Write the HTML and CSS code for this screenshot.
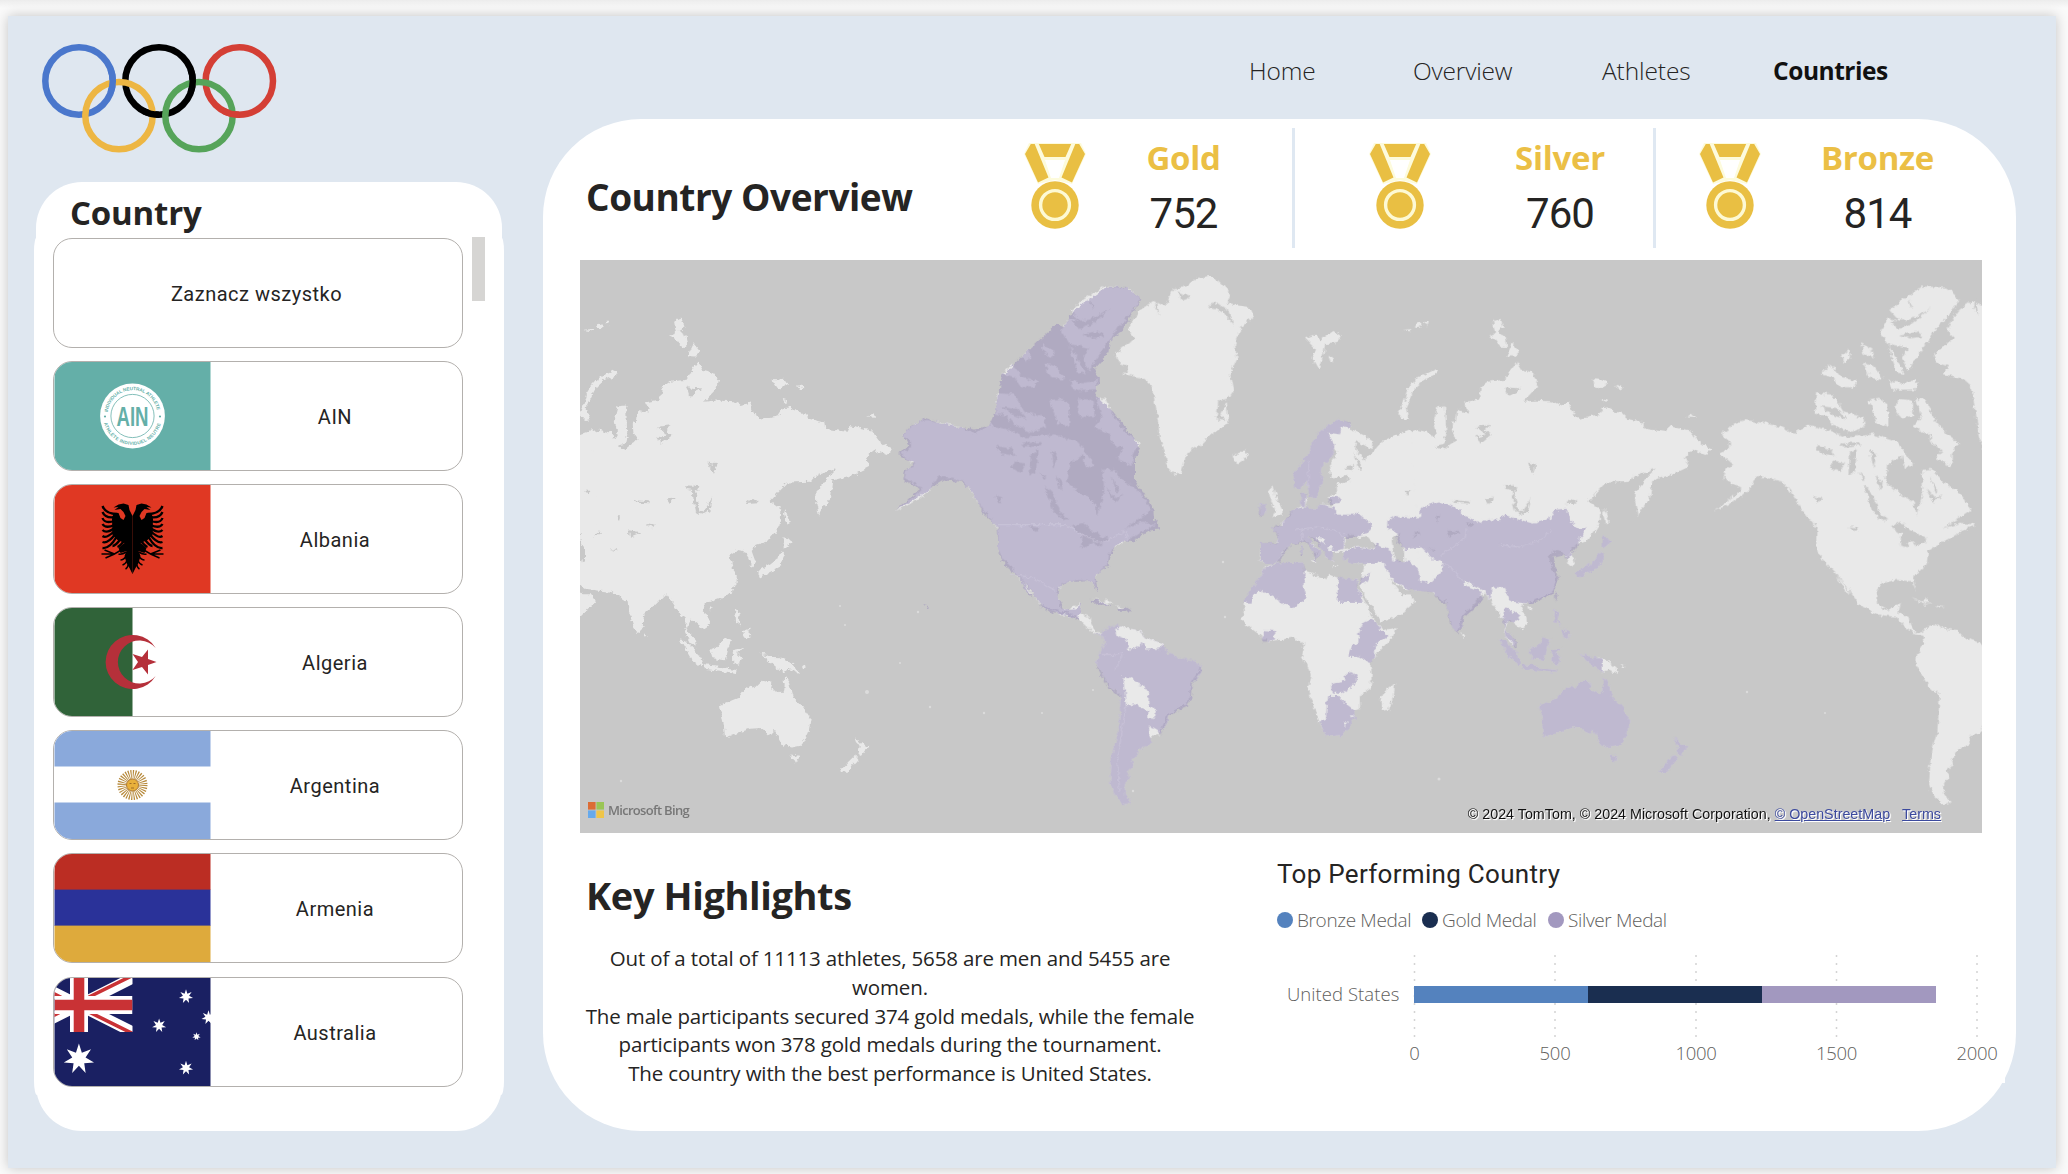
FILE: index.html
```html
<!DOCTYPE html>
<html lang="en">
<head>
<meta charset="utf-8">
<title>Countries</title>
<link rel="stylesheet" href="styles.css">
</head>
<body>
<div class="board">
  <div class="left">
    <svg class="rings" viewBox="42 43 236 110" fill="none" stroke-width="6.5">
      <circle cx="79" cy="81" r="33.7" stroke="#4a77cc"/>
      <circle cx="159" cy="81" r="33.7" stroke="#000"/>
      <circle cx="239.3" cy="81" r="33.7" stroke="#d43f35"/>
      <circle cx="119" cy="115.6" r="33.7" stroke="#edb643"/>
      <circle cx="199" cy="115.6" r="33.7" stroke="#56a45a"/>
      <path d="M110.7 69.5A33.7 33.7 0 0 1 110.7 92.5" stroke="#4a77cc"/>
      <path d="M190.7 69.5A33.7 33.7 0 0 1 190.7 92.5M159 114.7A33.7 33.7 0 0 1 143.2 110.8" stroke="#000"/>
      <path d="M239.3 114.7A33.7 33.7 0 0 1 223.5 110.8" stroke="#d43f35"/>
    </svg>
    <aside class="sidebar">
      <h2 class="side-title">Country</h2>
      <div class="list">
        <div class="items">
          <div class="item"><span class="name">Zaznacz wszystko</span></div>
          <div class="item">
            <svg class="flag" viewBox="0 0 156 108"><rect width="156" height="108" fill="#64afa8"/><circle cx="78" cy="54" r="32.4" fill="#fff"/><circle cx="78" cy="54" r="21.6" fill="none" stroke="#64afa8" stroke-width=".8"/>
              <circle cx="50.5" cy="54.5" r="1.1" fill="#64afa8"/><circle cx="105.5" cy="54.5" r="1.1" fill="#64afa8"/>
              <path id="arcTop" d="M53.2 50A25 25 0 0 1 102.800 50" fill="none"/><path id="arcBottom" d="M49.500 61A29.500 29.500 0 0 0 106.500 61" fill="none"/>
              <text class="ain-ring"><textPath href="#arcTop" textLength="70">INDIVIDUAL NEUTRAL ATHLETE</textPath></text>
              <text class="ain-ring"><textPath href="#arcBottom" textLength="76">ATHLÈTE INDIVIDUEL NEUTRE</textPath></text>
              <text class="ain" x="78" y="64" textLength="32" lengthAdjust="spacingAndGlyphs" text-anchor="middle">AIN</text></svg>
            <span class="name">AIN</span></div>
          <div class="item">
            <svg class="flag" viewBox="0 0 156 108"><rect width="156" height="108" fill="#e03823"/>
              <g id="eagleHalf"><path d="M78 31L81 25L82 20L87 18.500L92 19.500L97 22.500L92 22L96 25L90 24L87 27L85 31L87 35L90 33L92 28L97 28L98.500 34L98 50L93 55L86 58L92 63L90 68L84 66L86 71L84 78L81 83L78 89Z"/>
              <path fill="none" stroke="#000" stroke-width="2.300" d="M93 29Q105 29 108 21M95 32Q105 34 108 27M96 36Q106 39 108 33M96 40Q105 44 108 39M96 43Q104 49 108 45M96 46Q104 54 108 51M95 49Q103 59 108 57M94 52Q101 64 108 63M90 54Q95 61 98 61M86 55Q90 61 93 62"/>
              <path fill="none" stroke="#000" stroke-width="1.500" d="M86 63L96 69L109 69M96 69L106 65M96 69L105 73M84 67Q89 70 92 69M84 71Q87 75 90 75M83 75Q85 79 88 80M82 79Q83 83 85 84"/></g>
              <use href="#eagleHalf" transform="matrix(-1 0 0 1 156 0)"/></svg>
            <span class="name">Albania</span></div>
          <div class="item">
            <svg class="flag" viewBox="0 0 156 108"><rect width="156" height="108" fill="#fff"/><rect width="78" height="108" fill="#306339"/><path fill="#b5303a" d="M101.200 40A27 27 0 1 0 101.200 68A21.500 21.500 0 1 1 101.200 40ZM102 54L93.500 57L93.500 66.500L87.500 59L78 62L83.500 54L78 46L87.500 49L93.500 41.500L93.500 51Z"/></svg>
            <span class="name">Algeria</span></div>
          <div class="item">
            <svg class="flag" viewBox="0 0 156 108"><rect width="156" height="108" fill="#fff"/><path fill="#8aa9db" d="M0 0H156V35.600H0ZM0 71.600H156V108H0Z"/><circle cx="78" cy="54" r="10.500" fill="none" stroke="#b78a3c" stroke-width="9" stroke-dasharray="1 1.060"/><circle cx="78" cy="54" r="6" fill="#e8b03b" stroke="#a8702a" stroke-width=".9"/><path d="M75 52.500h2M79 52.500h2M76.500 57h3" stroke="#8c5a20" stroke-width=".8"/></svg>
            <span class="name">Argentina</span></div>
          <div class="item">
            <svg class="flag" viewBox="0 0 156 108"><rect width="156" height="36" fill="#bb2d23"/><rect y="35.600" width="156" height="36.400" fill="#2a3299"/><rect y="71.600" width="156" height="36.400" fill="#deaa3c"/></svg>
            <span class="name">Armenia</span></div>
          <div class="item">
            <svg class="flag" viewBox="0 0 156 108"><defs><clipPath id="jack"><rect width="78" height="54"/></clipPath>
              <path id="star7" fill="#fff" d="M0-10L1.910-3.960L7.820-6.230L4.290-.98L9.750 2.230L3.440 2.740L4.340 9.010L0 4.400L-4.340 9.010L-3.440 2.740L-9.750 2.230L-4.290-.98L-7.820-6.230L-1.910-3.960Z"/></defs>
              <rect width="156" height="108" fill="#1a2062"/>
              <g clip-path="url(#jack)"><path d="M-29 0L78 54M-29 54L78 0" stroke="#fff" stroke-width="11"/><path d="M24.500 29.500L78 56M24.500 24.500L78-2M-29 2L24.500 29M-29 52L24.500 25" transform="translate(0 -.500)" stroke="#c93235" stroke-width="3.600"/><path d="M24.500 0V54M0 27H78" stroke="#fff" stroke-width="18"/><path d="M24.500 0V54M0 27H78" stroke="#c93235" stroke-width="10.600"/></g>
              <use href="#star7" transform="translate(24.400 81) scale(1.550)"/><use href="#star7" transform="translate(131.500 18.500) scale(.72)"/><use href="#star7" transform="translate(104.600 47.600) scale(.72)"/><use href="#star7" transform="translate(154 39.500) scale(.72)"/><use href="#star7" transform="translate(142 58.500) scale(.43)"/><use href="#star7" transform="translate(131.500 90) scale(.72)"/></svg>
            <span class="name">Australia</span></div>
        </div>
        <div class="scroll"></div>
      </div>
    </aside>
  </div>
  <div class="right">
    <nav class="nav"><a class="n1">Home</a><a class="n2">Overview</a><a class="n3">Athletes</a><a class="n4">Countries</a></nav>
    <main class="panel">
      <header class="head">
        <h1 class="title">Country Overview</h1>
        <div class="stat gold">
          <svg class="medal" viewBox="0 0 60 85"><defs><g id="medal"><path fill="#fdfbdc" d="M4-1H56L61 10L47 40L30 36L13 40L-1 10Z"/><path fill="#fff" d="M20 16H40L34 34H26Z"/><path fill="#e9bf43" d="M5.800 0H9.700L23.500 33.500L13 38.500L0 10ZM54.200 0H50.300L36.500 33.500L47 38.500L60 10ZM13.800 0H46.200L40.500 13H19.500Z"/><circle cx="30" cy="61" r="23.700" fill="#e9bf43"/><circle cx="30" cy="61" r="14.400" fill="#e9bf43" stroke="#fdf9d4" stroke-width="3.400"/></g></defs><use href="#medal"/></svg>
          <div class="fig"><b>Gold</b><span>752</span></div>
        </div>
        <div class="stat silver"><svg class="medal" viewBox="0 0 60 85"><use href="#medal"/></svg><div class="fig"><b>Silver</b><span>760</span></div></div>
        <div class="stat bronze"><svg class="medal" viewBox="0 0 60 85"><use href="#medal"/></svg><div class="fig"><b>Bronze</b><span>814</span></div></div>
      </header>
      <div class="map">
        <svg class="world" viewBox="0 0 1402 573">
          <defs>
            <filter id="coast" x="0" y="0" width="1402" height="573" filterUnits="userSpaceOnUse" color-interpolation-filters="sRGB">
              <feTurbulence type="fractalNoise" baseFrequency=".2" numOctaves="3" seed="4" result="n"/>
              <feDisplacementMap in="SourceGraphic" in2="n" scale="6" xChannelSelector="R" yChannelSelector="G"/>
            </filter>
            <path id="isles" d="M330 1035L345 1037L375 1062L398 1093L392 1106L363 1086ZM398 1100L440 1104L460 1112L500 1116L498 1124L402 1113ZM420 1062L445 1053L465 1030L484 1036L474 1060L466 1090L428 1085ZM488 1064L524 1057L502 1070L514 1080L507 1102L490 1097ZM495 953L510 965L506 986L518 1000L498 988ZM516 1013L538 1006L541 1034L525 1030ZM570 1073L590 1076L605 1084L638 1085V1122L600 1095Z"/>
            <path id="oz" d="M450 1210L505 1190L520 1172L545 1158L555 1165L578 1145L605 1150L600 1165L635 1180L643 1170L645 1135L657 1150L668 1185L700 1215L722 1245L716 1280L696 1317L665 1322L635 1314L612 1275L598 1288L575 1270L540 1272L465 1296L462 1265ZM661 1341L688 1344L675 1363ZM856 1295L874 1311L895 1319L876 1345L862 1338L866 1322ZM856 1342L866 1352L832 1390L811 1384L835 1360Z"/>
            <path id="japan" d="M641 760L668 775L641 794ZM632 800L645 813L630 842L600 856L567 872L561 855L601 836L624 820Z"/>
            <g id="old">
              <path d="M20 495L50 490L88 478L122 486L136 500L143 490L134 455L146 415L168 413L172 490L165 515L140 520L165 530L185 515L206 505L190 485L188 455L200 460L205 425L240 432L225 405L270 397L275 365L300 350L350 345L365 320L385 297L398 318L430 325L447 345L443 365L402 403L440 400L490 402L515 412L540 405L552 435L572 448L625 440L640 420L660 418L680 430L700 432L722 450L763 458L766 475L830 483L838 468L905 480L925 505L945 518L970 528L950 545L910 530L888 552L897 577L850 597L790 612L783 660L760 685L747 706L738 670L740 645L765 612L800 580L735 600L722 616L650 618L598 668L634 690L632 725L615 750L590 775L560 783L545 800L557 830L545 842L535 820L520 800L503 797L478 812L490 850L500 862L500 885L490 905L470 920L405 940L395 960L415 975L417 995L400 1008L362 982L350 1010L378 1035L380 1052L362 1045L345 1015L350 985L325 962L310 940L288 912L240 955L222 970L218 1000L203 1018L190 1000L175 955L172 925L165 935L145 920L125 908L80 905L20 890Z"/>
              <path d="M646 688L659 722L649 727L642 700ZM219 1015L230 1027L222 1031ZM418 946L428 950L420 958ZM138 318L143 330L105 345L80 365L65 390L50 420L60 450L45 452L28 435L45 400L55 370L80 345L110 330ZM312 188L335 183L344 205L325 215L350 230L355 258L335 257L315 235L300 228L318 222ZM370 248L390 270L378 283L352 282ZM608 343L640 345L657 355L630 368L615 364ZM678 358L704 365L690 372ZM636 395L654 400L644 407ZM892 445L908 435L920 446ZM82 198L95 195L93 207L82 207ZM103 192L116 190L114 200ZM40 212L70 210L66 216ZM625 1080L655 1090L680 1110L690 1127L660 1115L636 1122V1085ZM695 1100L710 1105L700 1110Z"/>
              <use href="#isles"/><use href="#oz"/><use href="#japan"/>
              <g transform="translate(-1167)">
                <path d="M1235 478L1190 492L1145 510L1110 545L1092 560L1065 525L1070 508L1095 520L1112 528L1120 510L1090 490L1050 475L1055 462L1020 450L985 465L950 492L930 530L905 565L878 597L882 632L900 637L920 615L928 655L950 660L958 632L970 615L962 600L965 575L1000 545L1003 525L1012 540L990 575L992 605L1045 600L1050 612L1010 620L1012 650L985 655L1003 680L960 675L945 690L915 682L922 660L915 645L902 652L903 682L880 690L870 708L850 720L835 737L815 737L835 757L832 782L782 778L780 825L800 835L835 830L850 800L868 785L915 770L935 795L950 808L942 826L965 802L932 775L930 762L950 770L972 800L982 822L1000 827L997 805L1028 800L1030 822L1060 832L1095 833L1083 880L1080 892L1100 930L1145 988L1200 970L1245 935L1235 915L1205 915L1165 870L1180 880L1210 900L1260 905Z"/>
                <path d="M795 840L835 832L910 830L915 855L980 875L985 860L1010 870L1072 876L1070 890L1095 935L1115 975L1130 990L1145 1010L1187 1005L1180 1025L1110 1095L1115 1130L1112 1165L1080 1185L1080 1220L1062 1225L1065 1243L1045 1275L1020 1290L978 1293L958 1255L940 1210L925 1170L935 1130L905 1080L915 1050L880 1030L850 1035L800 1040L775 1020L745 1000L725 985L735 960L730 935L755 900L780 870ZM1185 1151L1182 1180L1167 1222L1146 1224L1141 1195L1155 1172Z"/>
                <path d="M805 640L818 628L825 650L848 690L845 705L818 712L825 690L812 662ZM778 675L800 675L798 700L778 703ZM695 548L735 532L746 548L715 567L700 560ZM915 235L945 225L962 240L1000 215L1025 230L1005 248L975 250L970 278L955 318L935 285L948 265ZM985 280L1003 295L992 300ZM902 785L908 785L908 808L902 805ZM930 822L948 822L944 830ZM1000 838L1018 842L1002 843Z"/>
                <path class="water" d="M1032 795L1038 765L1055 753L1075 768L1100 760L1128 785L1115 795L1075 788ZM1183 762L1200 752L1197 775L1212 792L1212 825L1190 830L1180 800L1175 775ZM1060 540L1078 560L1088 585L1075 580ZM1035 575L1062 572L1060 585L1035 583Z"/>
              </g>
              <path class="water" d="M368 620L378 650L388 698L405 690L427 658L418 692L395 704L378 695L370 660ZM262 470L305 465L285 480L307 492L275 515L262 495L290 490ZM350 365L395 368L375 380L358 390ZM415 565L442 570L432 595ZM528 675L550 662L568 673ZM190 665L240 668L238 673L195 672ZM288 660L315 658L300 676ZM175 745L215 750L180 762ZM68 765L90 745L94 753ZM345 625L388 628L385 640L350 635ZM120 795L140 797L135 800ZM45 640L65 640L55 650ZM140 705L150 705L147 725ZM230 725L255 730L245 737Z"/>
            </g>
            <g id="newWorld">
              <g transform="translate(333)">
                <path d="M665 490L705 460L735 452L790 460L840 470L880 488L925 465L990 480L1035 498L1120 490L1190 510L1215 540L1165 570L1155 615L1195 645L1240 670L1250 705L1262 665L1270 640L1265 585L1295 582L1335 620L1375 640L1412 690L1380 710L1330 740L1380 725L1425 730L1365 758L1320 780L1285 800L1280 835L1245 865L1240 880L1250 908L1235 880L1190 877L1145 885L1130 905L1135 945L1160 958L1203 938L1195 965L1225 975L1230 995L1245 1015L1275 1018L1272 1024L1240 1018L1215 1000L1185 975L1140 970L1080 945L1040 895L1005 855L965 820L952 800L952 740L910 695L870 640L845 615L800 605L770 600L750 635L700 670L640 695L700 655L725 635L670 605L680 580L700 570L660 540L690 525L690 510Z"/>
                <path d="M1010 865L1025 880L1052 915L1035 905ZM948 380L1000 385L1030 430L1090 445L1095 470L1050 485L1000 465L975 440L945 435ZM962 330L990 305L1000 312L1020 335L1070 350L1060 365L1020 365L1000 340ZM1168 160L1210 130L1270 97L1340 100L1378 130L1350 170L1310 205L1290 235L1275 250L1250 285L1225 320L1205 290L1225 260L1165 250L1140 215L1165 180L1200 190ZM1025 280L1045 265L1050 285L1035 300ZM1085 250L1115 265L1120 285L1090 278ZM1090 300L1125 310L1150 345L1110 340ZM1165 345L1205 355L1248 345L1250 370L1180 372ZM1165 255L1190 290L1215 330L1190 325ZM1195 395L1238 400L1240 440L1205 448L1188 430ZM1105 400L1140 395L1165 410L1165 470L1130 460ZM1245 395L1275 395L1300 445L1340 490L1377 515L1355 540L1355 575L1310 555L1325 530L1290 510L1290 490L1240 470L1265 445ZM1200 520L1240 570L1215 580ZM1235 925L1285 940L1275 943ZM1305 945L1335 950L1315 953ZM1275 925L1295 940L1270 935Z"/>
                <path class="water" d="M1172 735L1205 725L1230 745L1280 768L1250 790L1235 775L1215 790L1200 785L1205 755ZM1090 625L1115 645L1140 700L1165 715L1145 718L1115 690L1105 660ZM945 520L990 528L1005 548L960 540ZM1000 560L1035 565L1020 590L990 580ZM1050 540L1070 530L1065 590L1045 600ZM1110 530L1130 540L1120 580ZM1045 735L1075 738L1065 750ZM1075 590L1095 605L1090 612ZM940 655L965 660L955 672ZM1170 190L1230 185L1290 155L1230 200L1195 210ZM1275 630L1305 660L1330 650L1300 672ZM960 415L1010 420L1040 450L1000 440ZM1225 130L1240 150L1232 152ZM1200 225L1250 215L1270 230L1230 235ZM1020 515L1080 510L1085 518L1030 522ZM1290 600L1315 640L1308 645ZM1125 595L1145 620L1140 640Z"/>
              </g>
              <g transform="translate(1290)">
                <path id="greenland" d="M345 275L385 250L405 235L385 215L400 185L420 160L460 135L495 150L520 105L560 95L590 75L630 68L660 85L690 115L680 140L750 155L760 175L725 205L705 250L710 290L690 330L700 375L680 400L685 460L635 490L600 520L560 540L545 590L525 598L505 580L490 520L480 500L470 430L455 360L430 340L370 330L390 310L355 300Z"/>
                <path class="water" d="M470 130L478 175L465 150ZM535 110L575 125L545 135ZM620 150L650 140L690 165L700 200L670 165ZM655 400L685 395L660 440L680 455L650 450Z"/>
                <path id="south" d="M275 1020L300 1020L320 1005L355 995L365 1005L415 1010L435 1030L490 1045L500 1070L545 1085L585 1090L605 1110L600 1130L577 1150L573 1190L558 1210L510 1230L505 1250L480 1285L450 1290L455 1310L440 1322L415 1325L410 1345L395 1350L400 1370L383 1385L390 1400L375 1420L375 1445L395 1470L375 1475L345 1450L330 1420L335 1350L345 1310L355 1280L362 1185L325 1155L290 1100L295 1075L315 1045L310 1025Z"/>
              </g>
            </g>
          </defs>
          <g filter="url(#coast)">
          <g transform="translate(-10 -10) scale(.333333 .37628)" class="land">
            <use href="#old"/><use href="#newWorld"/>
            <use href="#old" x="2457"/><use href="#newWorld" x="2457"/>
            <g class="won">
              <path d="M985 540L1015 520L998 490L1020 470L1065 447L1130 463L1215 477L1258 465L1278 425L1283 385L1295 335L1370 270L1460 197L1482 205L1505 165L1560 130L1610 98L1665 98L1715 130L1690 165L1655 215L1620 240L1615 275L1575 315L1590 345L1577 385L1630 430L1675 480L1710 525L1695 560L1695 612L1750 685L1752 715L1773 742L1740 745L1685 775L1650 775L1625 800L1615 840L1577 865L1583 912L1565 880L1495 882L1468 895L1465 930L1485 957L1515 955L1537 938L1527 970L1522 985L1500 970L1445 965L1415 945L1385 910L1335 855L1310 845L1285 805L1283 735L1240 700L1222 665L1200 635L1170 615L1120 612L1085 632L1030 665L975 692L1050 635L1000 612L1005 585L1032 565L995 550Z"/>
              <path d="M1345 865L1360 882L1386 926L1362 900ZM1555 930L1580 930L1625 945L1595 945ZM1640 952L1670 950L1688 960L1645 962ZM1060 938L1074 950L1068 952Z"/>
              <use href="#south" x="1290"/>
              <g transform="translate(2457)"><use href="#isles"/><use href="#oz"/><use href="#japan"/>
                <path d="M343 955L358 948L368 965L388 962L393 980L373 990L353 990L348 1010L381 1035L383 1060L368 1045L348 1020ZM498 915L506 912L500 935Z"/></g>
              <g transform="translate(1290)">
                <path d="M795 842L835 832L910 830L918 855L910 890L920 925L875 952L785 903L762 910L755 937L728 937L755 900L780 870ZM1013 870L1070 876L1072 890L1088 935H1013ZM788 1010L822 1012L825 1035L790 1042ZM1090 990L1110 982L1130 990L1140 1012L1167 1025L1125 1050L1125 1075L1110 1098L1080 1080L1045 1078L1055 1050L1075 1045L1075 1020ZM993 1150L1035 1145L1038 1125L1058 1122L1070 1132L1065 1155L1025 1180L995 1175ZM985 1185L1018 1185L1040 1210L1062 1225L1065 1243L1045 1275L1020 1290L978 1293L958 1253L978 1250L980 1210Z"/>
                <path d="M782 778L835 780L832 757L815 737L845 730L880 690L915 682L945 690L960 675L1005 685L1005 703L1060 703L1075 700L1115 730L1110 745L1070 765L1035 765L1030 795L997 800L1000 825L985 825L965 790L930 762L935 780L965 802L945 828L940 800L915 775L868 785L845 805L835 830L800 835L782 825Z"/>
                <path d="M1055 460L1020 450L985 465L950 492L930 530L905 565L878 597L882 632L900 637L920 615L928 655L950 660L958 632L970 615L962 600L965 575L1000 545L1003 515L985 485L1020 490L1025 470L1050 475ZM902 650L918 645L915 680L903 678ZM985 657L1022 660L1020 672L990 675ZM778 675L800 675L798 700L776 705ZM1083 868L1110 860L1100 882L1078 892ZM902 785L908 785L908 812L902 810Z"/>
                <path d="M1165 720L1190 707L1235 712L1260 710L1262 683L1320 668L1380 690L1385 705L1440 725L1475 715L1500 718L1515 703L1560 718L1600 727L1650 715L1665 690L1700 688L1715 725L1735 740L1762 738L1740 765L1738 780L1710 810L1700 820L1690 808L1660 815L1665 835L1675 870L1655 915L1620 932L1590 940L1540 935L1525 930L1515 895L1475 898L1470 930L1455 905L1395 880L1390 890L1440 905L1447 932L1390 975L1385 1005L1370 1020L1350 990L1338 940L1320 935L1300 910L1230 903L1190 885L1175 870L1158 845L1150 830L1095 832L1060 832L1030 822L1028 800L1075 790L1120 797L1125 780L1175 800L1180 825L1230 828L1255 850L1260 880L1290 885L1328 850L1330 830L1300 822L1265 790L1215 795L1190 775L1195 755L1165 740Z"/>
              </g>
            </g>
            <g transform="translate(1290)">
              <path d="M345 1008L365 1003L415 1010L435 1030L490 1045L485 1058L440 1062L432 1042L405 1058L385 1062L380 1035L350 1025ZM370 1137L395 1132L403 1147L430 1158L447 1180L445 1208L470 1222L465 1243L445 1242L445 1225L405 1208L378 1212ZM447 1262L482 1280L472 1290L448 1290ZM950 765L975 768L975 782L955 775ZM982 790L998 790L995 798L984 797ZM1028 1256L1040 1252L1038 1264ZM1053 1234L1061 1236L1057 1243ZM1700 828L1722 822L1722 838L1708 838Z"/>
              <path class="line" d="M-7 730H195L235 750L300 780L350 760L380 745V770M30 863L100 870L165 905M300 1075L340 1075L370 1070M345 1115L370 1075M378 1212L365 1290L350 1350L360 1440M1325 810L1360 790L1395 765L1400 740M1500 783L1560 790L1620 770L1655 745M1330 830L1370 860L1390 885M885 745L920 740L960 735M905 770L910 740M960 740L1005 745L1035 760M925 560L925 630"/>
              <path class="shade" d="M1372 1019L1390 976L1444 932M835 831L850 804L870 787M1584 938L1655 914L1674 872M120 945L230 975M290 1105L325 1158L363 1188M603 1112L577 1150L572 1190L558 1210L508 1232L480 1285"/>
            </g>
          </g>
          </g>
          <g fill="#dcdcdc"><circle cx="260" cy="346" r="1"/><circle cx="338" cy="352" r="1.200"/><circle cx="265" cy="365" r="1"/><circle cx="350" cy="447" r="1.200"/><circle cx="404" cy="453" r="1.200"/><circle cx="462" cy="453" r="1"/><circle cx="513" cy="430" r="1"/><circle cx="287" cy="432" r="2"/><circle cx="320" cy="403" r="1"/><circle cx="41" cy="521" r="1.200"/><circle cx="643" cy="302" r="1.200"/><circle cx="645" cy="357" r="1.200"/><circle cx="1245" cy="453" r="1"/><circle cx="1167" cy="432" r="1.200"/><circle cx="553" cy="531" r="1.200"/><circle cx="859" cy="519" r="1.500"/></g>
        </svg>
        <div class="bing"><svg viewBox="0 0 16 16"><path fill="#dc6c35" d="M0 0h7.600v7.600H0z"/><path fill="#9ac555" d="M8.400 0H16v7.600H8.400z"/><path fill="#66a9ec" d="M0 8.400h7.600V16H0z"/><path fill="#efc549" d="M8.400 8.400H16V16H8.400z"/></svg><span>Microsoft Bing</span></div>
        <div class="credit">© 2024 TomTom, © 2024 Microsoft Corporation, <a>© OpenStreetMap</a><a class="terms">Terms</a></div>
      </div>
      <div class="bottom">
        <section class="highlights">
          <h1>Key Highlights</h1>
          <p>Out of a total of 11113 athletes, 5658 are men and 5455 are<br>women.<br>The male participants secured 374 gold medals, while the female<br>participants won 378 gold medals during the tournament.<br>The country with the best performance is United States.</p>
        </section>
        <section class="chart">
          <h3>Top Performing Country</h3>
          <div class="legend"><span class="k bronze-k">Bronze Medal</span><span class="k gold-k">Gold Medal</span><span class="k silver-k">Silver Medal</span></div>
          <svg class="plot" viewBox="1265 945 740 138">
            <path d="M1414.500 955V1037M1555 955V1037M1696 955V1037M1836.500 955V1037M1977 955V1037" stroke="#d4d4d4" stroke-width="1.500" stroke-dasharray="2 6"/>
            <rect x="1414" y="986" width="174" height="17" fill="#5482be"/><rect x="1588" y="986" width="174" height="17" fill="#1a2e50"/><rect x="1762" y="986" width="174" height="17" fill="#a298bf"/>
            <text x="1399" y="1001" text-anchor="end" textLength="112">United States</text>
            <g text-anchor="middle"><text x="1414.500" y="1060">0</text><text x="1555" y="1060">500</text><text x="1696" y="1060">1000</text><text x="1836.500" y="1060">1500</text><text x="1977" y="1060">2000</text></g>
          </svg>
        </section>
      </div>
    </main>
  </div>
</div>
</body>
</html>
```
FILE: styles.css
```css
* { box-sizing: border-box; }
body { margin: 0; padding: 16px 0 0 8px; width: 2068px; height: 1174px; overflow: hidden; background: linear-gradient(#ececec, #fafafa 8px, #fafafa); font-family: "Open Sans", "Noto Sans", sans-serif; color: #252423; }
h1, h2, h3, p { margin: 0; }
.board { width: 2048px; height: 1152px; display: flex; background: #dfe7f0; box-shadow: 0 0 12px rgba(0, 0, 0, .22); }
.left { width: 535px; display: flex; flex-direction: column; }
.rings { width: 236px; height: 110px; margin: 27px 0 29px 34px; }
.sidebar { width: 466px; height: 949px; margin-left: 28px; background: #fff; border-radius: 46px; }
.side-title { height: 55px; padding: 8px 0 0 34px; font-size: 33px; line-height: 46px; font-weight: 700; letter-spacing: -.2px; }
.list { height: 858px; margin: 0 -2px; padding-left: 19px; display: flex; gap: 9px; background: #fff; border-radius: 3px / 14px; }
.items { width: 410px; display: flex; flex-direction: column; gap: 13.200px; margin-top: .5px; }
.item { height: 110px; display: flex; overflow: hidden; border: 1.500px solid #b3b0ad; border-radius: 19px; background: #fff; }
.flag { width: 157px; height: 108px; flex: none; }
.name { flex: 1; display: flex; align-items: center; justify-content: center; padding-top: 2px; padding-right: 3px; font: 400 20px/26px Roboto, sans-serif; letter-spacing: .5px; }
.ain { font: 700 28px "Liberation Sans", sans-serif; fill: #64afa8; }
.ain-ring { font: 700 4.700px "Liberation Sans", sans-serif; fill: #64afa8; }
.scroll { width: 12.500px; height: 64px; background: #d6d5d3; }

.right { width: 1513px; display: flex; flex-direction: column; }
.nav { height: 103px; padding: 36px 0 0 706px; display: flex; font-size: 24.500px; line-height: 38px; font-weight: 350; }
.n1 { width: 164px; letter-spacing: -.1px; }
.n2 { width: 189px; letter-spacing: -.2px; }
.n3 { width: 171px; letter-spacing: -.1px; }
.n4 { font-weight: 700; color: #111; letter-spacing: -.45px; }
.panel { width: 1473px; height: 1012px; padding: 0 0 0 37px; background: #fff; border-radius: 98px; }
.head { height: 141px; display: flex; }
.title { width: 445px; padding: 53px 0 0 6px; font-size: 37px; line-height: 50px; font-weight: 700; letter-spacing: -.45px; white-space: nowrap; }
.stat { display: flex; height: 120px; margin-top: 9px; }
.gold { width: 270px; border-right: 3px solid #dfe8f2; }
.silver { width: 361px; padding-left: 75px; border-right: 3px solid #dfe8f2; }
.bronze { padding-left: 44px; }
.medal { width: 60px; height: 85px; margin-top: 15.500px; flex: none; overflow: visible; }
.fig { width: 120px; display: flex; flex-direction: column; align-items: center; }
.gold .fig { margin-left: 38.500px; }
.silver .fig { margin-left: 70px; }
.bronze .fig { margin-left: 57.500px; }
.fig b { height: 61px; font-size: 33px; line-height: 59px; color: #ebbf45; letter-spacing: -.3px; }
.fig span { font: 400 42px/50px Roboto, sans-serif; letter-spacing: -1px; }
.map { position: relative; width: 1402px; height: 573px; background: #c8c8c8; overflow: hidden; }
.world { display: block; width: 1402px; height: 573px; }
.land { fill: #e9e9e9; }
.water { fill: #c8c8c8; }
.won { fill: #9d92bb; fill-opacity: .55; }
.line { fill: none; stroke: #d0cbde; stroke-width: 2; }
.shade { fill: none; stroke: #aca5c1; stroke-width: 4; }
.bing { position: absolute; left: 8px; bottom: 13px; display: flex; align-items: center; gap: 4px; font-size: 13px; line-height: 20px; font-weight: 600; color: #777; letter-spacing: -.7px; }
.bing svg { width: 16px; height: 16px; }
.credit { position: absolute; right: 41px; bottom: 10px; font: 14.300px/18px "Liberation Sans", sans-serif; color: #111; text-shadow: 1px 1px 1px #fff, 1px 1px 0 #fff; white-space: nowrap; }
.credit a { color: #3c4a9e; text-decoration: underline; }
.credit .terms { margin-left: 12px; }
.bottom { display: flex; height: 298px; }
.highlights { width: 620px; }
.highlights h1 { padding: 36px 0 0 6px; font-size: 38px; line-height: 52px; font-weight: 700; letter-spacing: -.4px; }
.highlights p { margin-top: 23px; text-align: center; font-size: 20.500px; line-height: 28.750px; white-space: nowrap; letter-spacing: -.15px; }
.chart { width: 740px; height: 250px; margin-left: 65px; background: #fff; }
.chart h3 { height: 71px; padding: 23px 0 0 12px; font: 400 26px/36px Roboto, sans-serif; letter-spacing: .3px; }
.legend { display: flex; height: 41px; padding-left: 12px; font-size: 19px; line-height: 32px; font-weight: 350; color: #605e5c; }
.k { display: flex; align-items: center; gap: 4px; letter-spacing: -.35px; height: 32px; white-space: nowrap; }
.k::before { content: ""; width: 16px; height: 16px; border-radius: 50%; }
.bronze-k { width: 145px; }
.gold-k { width: 126px; }
.bronze-k::before { background: #5482be; }
.gold-k::before { background: #1a2e50; }
.silver-k::before { background: #a298bf; }
.plot { display: block; width: 740px; height: 138px; font-size: 18.500px; font-weight: 350; fill: #605e5c; letter-spacing: -.3px; }
```
